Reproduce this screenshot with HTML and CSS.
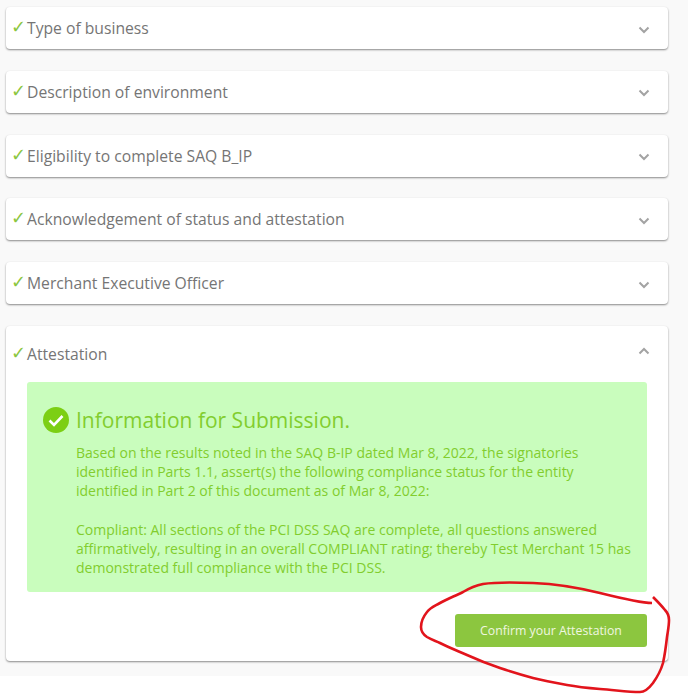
FILE: index.html
```html
<!DOCTYPE html>
<html lang="en">
<head>
    <meta charset="UTF-8">
    <meta name="viewport" content="width=device-width, initial-scale=1.0">
    <title>Attestation</title>
    <link rel="stylesheet" href="styles.css">
</head>
<body>
    <div class="page">
        <div class="card">
            <div class="card-head">
                <span class="tick">✓</span><span class="card-title">Type of business</span>
                <svg class="chevron" viewBox="0 0 12 8"><path d="M1.5 1.5 6 6l4.5-4.5"/></svg>
            </div>
        </div>
        <div class="card">
            <div class="card-head">
                <span class="tick">✓</span><span class="card-title">Description of environment</span>
                <svg class="chevron" viewBox="0 0 12 8"><path d="M1.5 1.5 6 6l4.5-4.5"/></svg>
            </div>
        </div>
        <div class="card">
            <div class="card-head">
                <span class="tick">✓</span><span class="card-title">Eligibility to complete SAQ B_IP</span>
                <svg class="chevron" viewBox="0 0 12 8"><path d="M1.5 1.5 6 6l4.5-4.5"/></svg>
            </div>
        </div>
        <div class="card">
            <div class="card-head">
                <span class="tick">✓</span><span class="card-title">Acknowledgement of status and attestation</span>
                <svg class="chevron" viewBox="0 0 12 8"><path d="M1.5 1.5 6 6l4.5-4.5"/></svg>
            </div>
        </div>
        <div class="card">
            <div class="card-head">
                <span class="tick">✓</span><span class="card-title">Merchant Executive Officer</span>
                <svg class="chevron" viewBox="0 0 12 8"><path d="M1.5 1.5 6 6l4.5-4.5"/></svg>
            </div>
        </div>
        <div class="card card-open">
            <div class="card-head">
                <span class="tick">✓</span><span class="card-title">Attestation</span>
                <svg class="chevron" viewBox="0 0 12 8"><path d="M1.5 6.5 6 2l4.5 4.5"/></svg>
            </div>
            <div class="notice">
                <div class="notice-head">
                    <svg class="notice-icon" viewBox="0 0 26 26">
                        <circle cx="13" cy="13" r="13"/>
                        <path d="M6.5 13.5 11 18l8.5-9"/>
                    </svg>
                    <h2>Information for Submission.</h2>
                </div>
                <div class="notice-body">
                    <p>Based on the results noted in the SAQ B-IP dated Mar 8, 2022, the signatories identified in Parts 1.1, assert(s) the following compliance status for the entity identified in Part 2 of this document as of Mar 8, 2022:</p>
                    <p>Compliant: All sections of the PCI DSS SAQ are complete, all questions answered affirmatively, resulting in an overall COMPLIANT rating; thereby Test Merchant 15 has demonstrated full compliance with the PCI DSS.</p>
                </div>
            </div>
            <div class="actions">
                <button class="confirm">Confirm your Attestation</button>
            </div>
        </div>
    </div>

    <!-- hand drawn circle on top of the screenshot -->
    <svg class="scribble" viewBox="0 0 688 697">
        <path d="M652 603C640 603 620 598 600 593C580 588 560 584 533 583C510 582 495 582 483 584C473 586 468 589 463 592C455 596 447 599 440 603C433 607 430 608 427 612C423 617 421 622 421 627C421 632 424 635 427 637C432 640 436 641 440 643C450 648 458 651 467 655C478 660 488 664 500 668C512 672 522 675 533 678C545 681 556 683 567 685C578 687 588 688 600 689C615 690 628 692 640 692C646 692 650 687 653 683C658 676 661 670 663 663C665 654 666 646 667 637C668 630 669 626 669 620C669 616 668 613 665 610C661 605 657 601 653 597"/>
    </svg>
</body>
</html>
```

FILE: styles.css
```css
html, body {
    margin: 0;
    background-color: #fff;
}

body {
    font-family: "Open Sans", sans-serif;
    position: relative;
    height: 697px;
    overflow: hidden;
}

.page {
    background-color: #f9f9f9;
    height: 676px;
    padding: 7px 20px 0 6px;
    box-sizing: border-box;
    display: flex;
    flex-direction: column;
    gap: 21.8px;
}

.card {
    background-color: #fff;
    border-radius: 4px;
    box-shadow: 0 1px 2px rgba(0, 0, 0, 0.45);
}

.card-head {
    height: 42px;
    display: flex;
    align-items: center;
    padding: 0 18px 0 5px;
    font-size: 15.7px;
    color: #757575;
}

.card-open {
    height: 335px;
}

.card-open .card-head {
    height: 56px;
}

.tick {
    color: #8cc63f;
    font-size: 18px;
    width: 16px;
    margin-bottom: 3px;
    font-family: "DejaVu Sans", sans-serif;
}

.card-title {
    flex: 1;
}

.chevron {
    width: 12px;
    height: 8px;
    margin-top: 3px;
    fill: none;
    stroke: #a3a3a3;
    stroke-width: 2;
}

.card-open .chevron {
    margin-top: -5px;
}

.notice {
    margin: 0 21px;
    padding: 23px 15px 0 16px;
    height: 210px;
    box-sizing: border-box;
    background-color: #c9fdbd;
    border-radius: 3px;
    color: #82cd2e;
    font-size: 14px;
    line-height: 19px;
}

.notice-head {
    display: flex;
    align-items: center;
    gap: 7px;
    margin-bottom: 8px;
}

.notice-icon {
    width: 26px;
    height: 26px;
    flex: none;
}

.notice-icon circle {
    fill: #7ccf14;
}

.notice-icon path {
    fill: none;
    stroke: #fff;
    stroke-width: 2.6;
}

.notice h2 {
    margin: 0;
    font-size: 21px;
    font-weight: 400;
    line-height: 30px;
}

.notice-body {
    padding-left: 33px;
}

.notice p {
    margin: 0 0 20px;
}

.actions {
    display: flex;
    justify-content: flex-end;
    padding: 22px 21px 0;
}

.confirm {
    width: 192px;
    height: 33px;
    border: none;
    border-radius: 3px;
    background-color: #8cc63f;
    color: #f0f7e0;
    font-family: "Open Sans", sans-serif;
    font-size: 12.3px;
    padding: 0;
}

.scribble {
    position: absolute;
    left: 0;
    top: 0;
    width: 688px;
    height: 697px;
    pointer-events: none;
    fill: none;
    stroke: #e2141c;
    stroke-width: 2.6;
}
```
